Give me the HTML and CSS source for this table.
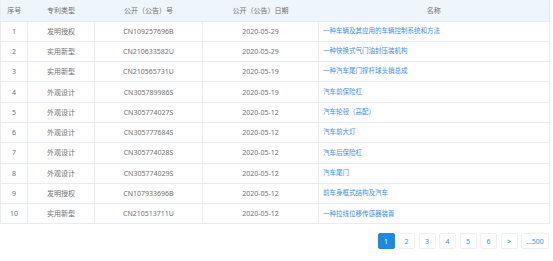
FILE: index.html
```html
<!DOCTYPE html>
<html lang="zh-CN">
<head>
    <meta charset="UTF-8">
    <title>专利列表</title>
    <link rel="stylesheet" href="styles.css">
</head>
<body>
    <div class="patent-list">
        <table class="patent-table">
            <colgroup>
                <col class="col-no">
                <col class="col-type">
                <col class="col-pub">
                <col class="col-date">
                <col class="col-name">
            </colgroup>
            <thead>
                <tr>
                    <th>序号</th>
                    <th>专利类型</th>
                    <th>公开（公告）号</th>
                    <th>公开（公告）日期</th>
                    <th>名称</th>
                </tr>
            </thead>
            <tbody>
                <tr><td>1</td><td>发明授权</td><td>CN109257696B</td><td>2020-05-29</td><td class="name"><a href="#">一种车辆及其应用的车辆控制系统和方法</a></td></tr>
                <tr><td>2</td><td>实用新型</td><td>CN210633582U</td><td>2020-05-29</td><td class="name"><a href="#">一种快换式气门油封压装机构</a></td></tr>
                <tr><td>3</td><td>实用新型</td><td>CN210565731U</td><td>2020-05-19</td><td class="name"><a href="#">一种汽车尾门撑杆球头销总成</a></td></tr>
                <tr><td>4</td><td>外观设计</td><td>CN305789986S</td><td>2020-05-19</td><td class="name"><a href="#">汽车前保险杠</a></td></tr>
                <tr><td>5</td><td>外观设计</td><td>CN305774027S</td><td>2020-05-12</td><td class="name"><a href="#">汽车轮毂（高配）</a></td></tr>
                <tr><td>6</td><td>外观设计</td><td>CN305777684S</td><td>2020-05-12</td><td class="name"><a href="#">汽车前大灯</a></td></tr>
                <tr><td>7</td><td>外观设计</td><td>CN305774028S</td><td>2020-05-12</td><td class="name"><a href="#">汽车后保险杠</a></td></tr>
                <tr><td>8</td><td>外观设计</td><td>CN305774029S</td><td>2020-05-12</td><td class="name"><a href="#">汽车尾门</a></td></tr>
                <tr><td>9</td><td>发明授权</td><td>CN107933696B</td><td>2020-05-12</td><td class="name"><a href="#">前车身框式结构及汽车</a></td></tr>
                <tr><td>10</td><td>实用新型</td><td>CN210513711U</td><td>2020-05-12</td><td class="name"><a href="#">一种拉线位移传感器装置</a></td></tr>
            </tbody>
        </table>

        <div class="pager">
            <a href="#" class="page active">1</a>
            <a href="#" class="page">2</a>
            <a href="#" class="page">3</a>
            <a href="#" class="page">4</a>
            <a href="#" class="page">5</a>
            <a href="#" class="page">6</a>
            <a href="#" class="page">&gt;</a>
            <a href="#" class="page wide">...500</a>
        </div>
    </div>
</body>
</html>
```

FILE: styles.css
```css
:root {
    --border: #e6eef4;
    --head-bg: #eef6fb;
    --text: #707070;
    --link: #3a8ee6;
    --primary: #1e88e5;
}

* {
    box-sizing: border-box;
    margin: 0;
    padding: 0;
}

body {
    font-family: "Noto Sans", "Noto Sans CJK SC", sans-serif;
    font-size: 7px;
    color: var(--text);
    background: #fff;
}

.patent-list {
    width: 549px;
}

.patent-table {
    width: 100%;
    border-collapse: collapse;
    table-layout: fixed;
}

.col-no { width: 27px; }
.col-type { width: 67px; }
.col-pub { width: 108px; }
.col-date { width: 116px; }
.col-name { width: 231px; }

.patent-table th {
    height: 21px;
    background-color: var(--head-bg);
    font-weight: normal;
    color: var(--text);
    text-align: center;
    border-bottom: 1px solid var(--border);
}

.patent-table td {
    height: 20.3px;
    text-align: center;
    border: 1px solid var(--border);
    line-height: 1;
    white-space: nowrap;
}

.patent-table th:first-child,
.patent-table td:first-child {
    border-left: 1px solid var(--border);
}

.patent-table th:last-child {
    border-right: 1px solid var(--border);
}

.patent-table td.name {
    text-align: left;
    padding-left: 4px;
    font-size: 6.5px;
}

.patent-table a {
    color: var(--link);
    text-decoration: none;
}

.pager {
    display: flex;
    justify-content: flex-end;
    gap: 3.5px;
    margin-top: 9px;
}

.page {
    display: flex;
    align-items: center;
    justify-content: center;
    width: 17px;
    height: 16px;
    border: 1px solid #eef1f4;
    border-radius: 2px;
    color: var(--link);
    text-decoration: none;
    font-size: 7px;
}

.page.wide {
    width: 28px;
}

.page.active {
    background-color: var(--primary);
    border-color: var(--primary);
    color: #fff;
}
```
